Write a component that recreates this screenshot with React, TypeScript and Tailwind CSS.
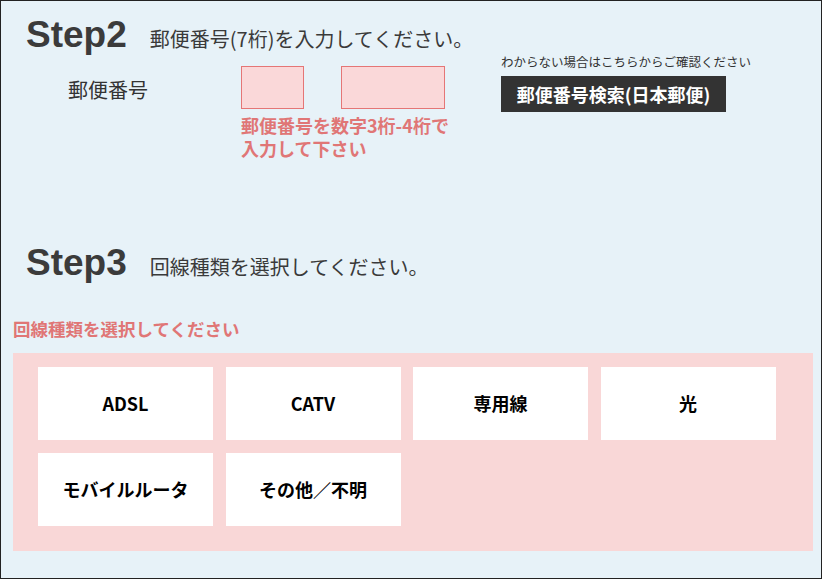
const lineTypes = ['ADSL', 'CATV', '専用線', '光', 'モバイルルータ', 'その他／不明'];

function StepTitle({ step, text }: { step: string; text: string }) {
  return (
    <div className="flex items-baseline ml-[13px]">
      <span className="font-['Liberation_Sans',Arial,sans-serif] font-bold text-[37px] leading-none text-[#3b3b3b]">
        {step}
      </span>
      <span className="ml-[23px] text-[20px] leading-none text-[#3a3a3a]">{text}</span>
    </div>
  );
}

export default function App() {
  return (
    <div className="w-[822px] h-[579px] box-border border border-[#222] bg-[#e7f2f8] px-[12px] pt-[15px] font-['Noto_Sans_CJK_JP','Noto_Sans',sans-serif]">
      {/* Step2 */}
      <StepTitle step="Step2" text="郵便番号(7桁)を入力してください。" />

      <div className="flex items-start">
        <div className="w-[228px] pl-[55px] pt-[25px] text-[20px] leading-[23px] text-[#333]">郵便番号</div>

        <div className="w-[260px]">
          <div className="flex gap-[37px] mt-[13px]">
            <input className="w-[63px] h-[43px] box-border border border-[#e57676] bg-[#fad8d9] outline-none" />
            <input className="w-[104px] h-[43px] box-border border border-[#e57676] bg-[#fad8d9] outline-none" />
          </div>
          <p className="mt-[5px] text-[18px] leading-[23px] font-bold text-[#e07676]">
            郵便番号を数字3桁-4桁で
            <br />
            入力して下さい
          </p>
        </div>

        <div className="flex flex-col items-start">
          <p className="text-[12.5px] leading-[18px] text-[#333]">わからない場合はこちらからご確認ください</p>
          <button className="mt-[5px] w-[225px] h-[36px] bg-[#333] text-white font-bold text-[18px] leading-none">
            郵便番号検索(日本郵便)
          </button>
        </div>
      </div>

      {/* Step3 */}
      <div className="mt-[84px]">
        <StepTitle step="Step3" text="回線種類を選択してください。" />
      </div>

      <p className="mt-[36px] text-[17.5px] leading-[23px] font-bold text-[#e07676]">回線種類を選択してください</p>

      <div className="mt-[13px] w-[800px] bg-[#f9d7d7] pl-[25px] pt-[14px] pb-[25px]">
        <div className="grid grid-cols-[repeat(4,175px)] gap-x-[12.5px] gap-y-[13px]">
          {lineTypes.map((t) => (
            <button
              key={t}
              className="h-[73px] bg-white text-black font-bold text-[18px] flex items-center justify-center"
            >
              {t}
            </button>
          ))}
        </div>
      </div>
    </div>
  );
}
